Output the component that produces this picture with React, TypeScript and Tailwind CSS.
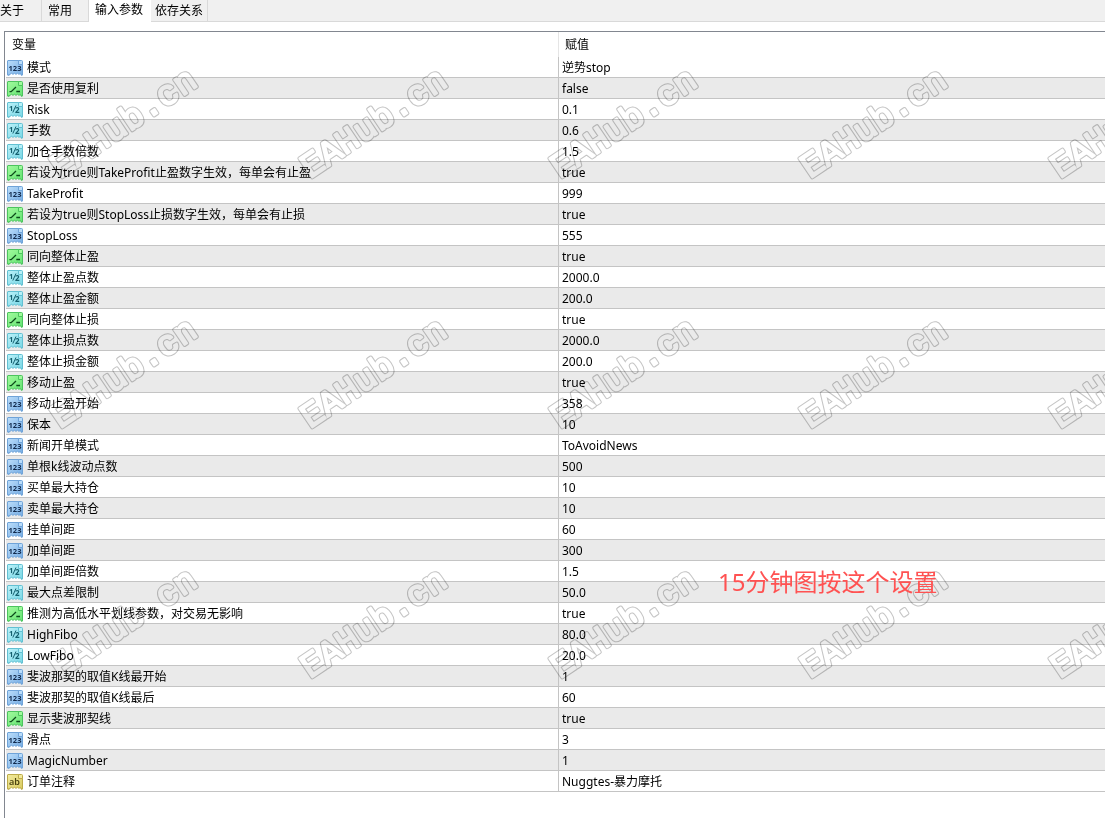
import React, { useState } from "react";

type Kind = "int" | "bool" | "double" | "string";

interface Param {
  kind: Kind;
  name: string;
  value: string;
}

const params: Param[] = [
  { kind: "int", name: "模式", value: "逆势stop" },
  { kind: "bool", name: "是否使用复利", value: "false" },
  { kind: "double", name: "Risk", value: "0.1" },
  { kind: "double", name: "手数", value: "0.6" },
  { kind: "double", name: "加仓手数倍数", value: "1.5" },
  { kind: "bool", name: "若设为true则TakeProfit止盈数字生效，每单会有止盈", value: "true" },
  { kind: "int", name: "TakeProfit", value: "999" },
  { kind: "bool", name: "若设为true则StopLoss止损数字生效，每单会有止损", value: "true" },
  { kind: "int", name: "StopLoss", value: "555" },
  { kind: "bool", name: "同向整体止盈", value: "true" },
  { kind: "double", name: "整体止盈点数", value: "2000.0" },
  { kind: "double", name: "整体止盈金额", value: "200.0" },
  { kind: "bool", name: "同向整体止损", value: "true" },
  { kind: "double", name: "整体止损点数", value: "2000.0" },
  { kind: "double", name: "整体止损金额", value: "200.0" },
  { kind: "bool", name: "移动止盈", value: "true" },
  { kind: "int", name: "移动止盈开始", value: "358" },
  { kind: "int", name: "保本", value: "10" },
  { kind: "int", name: "新闻开单模式", value: "ToAvoidNews" },
  { kind: "int", name: "单根k线波动点数", value: "500" },
  { kind: "int", name: "买单最大持仓", value: "10" },
  { kind: "int", name: "卖单最大持仓", value: "10" },
  { kind: "int", name: "挂单间距", value: "60" },
  { kind: "int", name: "加单间距", value: "300" },
  { kind: "double", name: "加单间距倍数", value: "1.5" },
  { kind: "double", name: "最大点差限制", value: "50.0" },
  { kind: "bool", name: "推测为高低水平划线参数，对交易无影响", value: "true" },
  { kind: "double", name: "HighFibo", value: "80.0" },
  { kind: "double", name: "LowFibo", value: "20.0" },
  { kind: "int", name: "斐波那契的取值K线最开始", value: "1" },
  { kind: "int", name: "斐波那契的取值K线最后", value: "60" },
  { kind: "bool", name: "显示斐波那契线", value: "true" },
  { kind: "int", name: "滑点", value: "3" },
  { kind: "int", name: "MagicNumber", value: "1" },
  { kind: "string", name: "订单注释", value: "Nuggtes-暴力摩托" },
];

const palette: Record<Kind, { light: string; dark: string; edge: string; ink: string }> = {
  int: { light: "#b9dcfa", dark: "#78aee4", edge: "#6fa3d8", ink: "#10294c" },
  bool: { light: "#a0fa9c", dark: "#66e474", edge: "#4cc45e", ink: "#0b4a1a" },
  double: { light: "#b8f0f8", dark: "#7bd8e6", edge: "#62c0d2", ink: "#14606f" },
  string: { light: "#f2ea9c", dark: "#d9cb62", edge: "#bcab48", ink: "#4a4210" },
};

function TypeIcon({ kind }: { kind: Kind }) {
  const c = palette[kind];
  return (
    <svg viewBox="0 0 16 16" className="size-4 shrink-0" aria-hidden="true">
      <defs>
        <linearGradient id={`fill-${kind}`} x1="0" y1="0" x2="1" y2="1">
          <stop offset="0" stopColor={c.light} />
          <stop offset="1" stopColor={c.dark} />
        </linearGradient>
      </defs>
      <path
        d="M1 0H11.5L16 4.5V15L14.5 16L13 14L12 15L10.5 13.5L9 15L7.5 13.5L6 15L4.5 13.5L3 15L1.5 16L0 15V1Z"
        fill={c.edge}
      />
      <path
        d="M1 1H11.5L15 4.5V14.5L13 13L12 14L10.5 12.5L9 14L7.5 12.5L6 14L4.5 12.5L3 14L1 14.5Z"
        fill={`url(#fill-${kind})`}
      />
      <path d="M11.5 .5H14.5Q15.5 .5 15.5 1.5V4.5H11.5Z" fill={c.light} stroke={c.edge} />
      {kind === "bool" && (
        <path d="M2.5 10.7H4.2L9 6M9.3 10.5H13" fill="none" stroke={c.ink} strokeWidth="1.3" />
      )}
      {kind === "int" && (
        <text x="8" y="11" textAnchor="middle" fontSize="7.5" fontWeight="700" fill={c.ink}>123</text>
      )}
      {kind === "double" && (
        <g fill={c.ink} fontWeight="700">
          <text x="2" y="9" fontSize="7.5">1</text>
          <path d="M9 3.5L5.8 10.5" stroke={c.ink} strokeWidth="1" />
          <text x="8" y="11" fontSize="8">2</text>
        </g>
      )}
      {kind === "string" && (
        <text x="7.5" y="11" textAnchor="middle" fontSize="9" fontWeight="600" fill={c.ink}>ab</text>
      )}
    </svg>
  );
}

const markColumns = [0, 250, 500, 750, 1000];
const markRows = [0, 250, 500];

function Watermark() {
  return (
    <svg
      className="pointer-events-none absolute inset-0 h-full w-full font-['Liberation_Mono',monospace] mix-blend-multiply"
      aria-hidden="true"
    >
      <defs>
        <mask id="mark-inside" maskUnits="userSpaceOnUse" x="-10" y="-40" width="200" height="60">
          <rect x="-10" y="-40" width="200" height="60" fill="white" />
          <text fontSize="35" fill="black" stroke="black" strokeWidth="2" strokeLinejoin="round">EAHub.cn</text>
        </mask>
      </defs>
      {markRows.map((y) =>
        markColumns.map((x) => (
          <g key={`${x}-${y}`} transform={`translate(${x + 60} ${y + 179}) rotate(-34)`}>
            <text
              mask="url(#mark-inside)"
              fontSize="35"
              fill="#c4c4c4"
              stroke="#c4c4c4"
              strokeWidth="4"
              strokeLinejoin="round"
            >
              EAHub.cn
            </text>
          </g>
        )),
      )}
    </svg>
  );
}

const tabs = [
  { label: "关于", className: "w-[42px]" },
  { label: "常用", className: "w-[47px] pl-1.5" },
  { label: "输入参数", className: "w-[62px] pl-1.5" },
  { label: "依存关系", className: "w-[57px] pl-1" },
];

export default function App() {
  const [active, setActive] = useState(2);
  return (
    <div className="relative flex min-h-screen flex-col overflow-hidden bg-white font-['Noto_Sans','Noto_Sans_CJK_SC',sans-serif] text-xs text-black">
      <div role="tablist" className="flex h-[22px] bg-[#f0f0f0]">
        {tabs.map((tab, i) => (
          <button
            key={tab.label}
            type="button"
            role="tab"
            aria-selected={active === i}
            onClick={() => setActive(i)}
            className={`${tab.className} text-left whitespace-nowrap ${
              active === i ? "bg-white pb-0.5" : "border-r border-b border-[#d9d9d9]"
            }`}
          >
            {tab.label}
          </button>
        ))}
        <div className="flex-1 border-b border-[#d9d9d9]" />
      </div>

      <div className="mt-[9px] ml-1 flex-1 border-t border-l border-[#828790] pl-px">
        <table className="w-full table-fixed border-separate border-spacing-0">
          <colgroup>
            <col className="w-[553px]" />
            <col />
          </colgroup>
          <thead>
            <tr className="h-[25px] text-left">
              <th scope="col" className="border-r border-[#e5e5e5] p-0 pl-1.5 font-normal">变量</th>
              <th scope="col" className="p-0 pl-1.5 font-normal">赋值</th>
            </tr>
          </thead>
          <tbody>
            {params.map((p) => (
              <tr key={p.name} className="h-[21px] even:bg-[#eaeaea]">
                <td className="border-r border-b border-[#c4c4c4] p-0">
                  <div className="flex h-5 items-center gap-1 pt-0.5 pl-px whitespace-nowrap">
                    <TypeIcon kind={p.kind} />
                    <span>{p.name}</span>
                  </div>
                </td>
                <td className="border-b border-[#c4c4c4] p-0 pl-[3px]">
                  <div className="flex h-5 items-center pt-0.5 whitespace-nowrap">{p.value}</div>
                </td>
              </tr>
            ))}
          </tbody>
        </table>
      </div>

      <Watermark />
      <p className="absolute top-[566px] left-[718px] text-2xl whitespace-nowrap text-[#ff5252]">
        15分钟图按这个设置
      </p>
    </div>
  );
}
